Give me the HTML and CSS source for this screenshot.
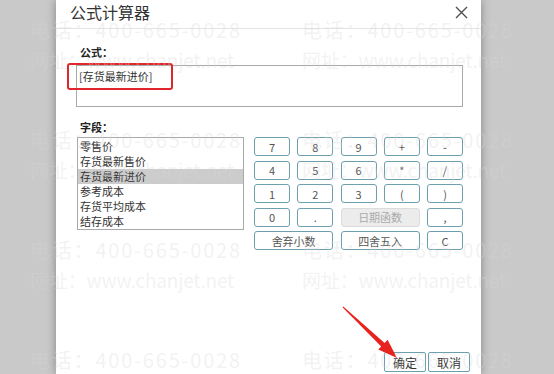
FILE: index.html
```html
<!DOCTYPE html>
<html>
<head>
    <title>公式计算器</title>
    <link rel="stylesheet" href="styles.css">
</head>
<body>
<div class="page">

    <div class="dialog">
        <div class="dlg-head">
            <span class="dlg-title">公式计算器</span>
            <svg class="dlg-close" width="13" height="13" viewBox="0 0 13 13">
                <path d="M1 1L12 12M12 1L1 12" stroke="#505050" stroke-width="1.4" fill="none"/>
            </svg>
        </div>

        <div class="dlg-body">
            <div class="field-label">公式：</div>
            <div class="formula-box">[存货最新进价]</div>

            <div class="field-label field-label-2">字段：</div>
            <div class="calc-row">
                <ul class="field-list">
                    <li>零售价</li>
                    <li>存货最新售价</li>
                    <li class="selected">存货最新进价</li>
                    <li>参考成本</li>
                    <li>存货平均成本</li>
                    <li>结存成本</li>
                </ul>

                <div class="keypad">
                    <button class="key">7</button>
                    <button class="key">8</button>
                    <button class="key">9</button>
                    <button class="key">+</button>
                    <button class="key">-</button>

                    <button class="key">4</button>
                    <button class="key">5</button>
                    <button class="key">6</button>
                    <button class="key">*</button>
                    <button class="key">/</button>

                    <button class="key">1</button>
                    <button class="key">2</button>
                    <button class="key">3</button>
                    <button class="key">(</button>
                    <button class="key">)</button>

                    <button class="key">0</button>
                    <button class="key">.</button>
                    <button class="key wide disabled">日期函数</button>
                    <button class="key">,</button>

                    <button class="key wide">舍弃小数</button>
                    <button class="key wide">四舍五入</button>
                    <button class="key">C</button>
                </div>
            </div>
        </div>

        <div class="dlg-foot">
            <button class="foot-btn">确定</button>
            <button class="foot-btn">取消</button>
        </div>
    </div>

    <!-- annotation marks -->
    <div class="mark-box"></div>
    <svg class="mark-arrow" width="554" height="374" viewBox="0 0 554 374">
        <polygon points="343.3,306.6 384.6,342.9 387.6,339.8 397,358 378.3,349.6 381.2,346.5 342.7,307.4" fill="#e8221e"/>
    </svg>

    <div class="watermark">
        <div class="wm"><p class="tel">电话：400-665-0028</p><p>网址：www.chanjet.net</p></div>
        <div class="wm"><p class="tel">电话：400-665-0028</p><p>网址：www.chanjet.net</p></div>
        <div class="wm"><p class="tel">电话：400-665-0028</p><p>网址：www.chanjet.net</p></div>
        <div class="wm"><p class="tel">电话：400-665-0028</p><p>网址：www.chanjet.net</p></div>
        <div class="wm"><p class="tel">电话：400-665-0028</p><p>网址：www.chanjet.net</p></div>
        <div class="wm"><p class="tel">电话：400-665-0028</p><p>网址：www.chanjet.net</p></div>
        <div class="wm"><p class="tel">电话：400-665-0028</p></div>
        <div class="wm"><p class="tel">电话：400-665-0028</p></div>
    </div>

</div>
</body>
</html>
```

FILE: styles.css
```css
body {
    margin: 0;
    background-color: #c9c9c9;
    font-family: "Noto Sans CJK SC", "Liberation Sans", sans-serif;
    color: #333;
    overflow: hidden;
}

.page {
    position: relative;
    width: 554px;
    height: 374px;
    padding-left: 56px;
    box-sizing: border-box;
}

.dialog {
    width: 425px;
    height: 374px;
    background-color: #fff;
    box-shadow: 0 0 9px rgba(0, 0, 0, 0.35);
    display: flex;
    flex-direction: column;
}

.dlg-head {
    height: 28px;
    border-bottom: 1px solid #e4e4e4;
    display: flex;
    align-items: center;
    justify-content: space-between;
    padding: 0 13px 0 14px;
}

.dlg-title {
    font-size: 16px;
    line-height: 20px;
    color: #333;
    margin-top: -5px;
}

.dlg-close {
    margin-top: -4px;
}

.dlg-body {
    padding: 15px 18px 0 20px;
}

.field-label {
    font-size: 11px;
    font-weight: bold;
    line-height: 16px;
    padding-left: 4px;
    color: #222;
}

.formula-box {
    margin-top: 5px;
    height: 42px;
    box-sizing: border-box;
    border: 1px solid #a9a9a9;
    padding: 2px 2px;
    font-size: 11px;
    line-height: 16px;
    color: #333;
}

.field-label-2 {
    margin-top: 12px;
}

.calc-row {
    margin-top: 2px;
    display: flex;
    gap: 10px;
}

.field-list {
    list-style: none;
    margin: 0 0 0 1px;
    padding: 1px 0 0 0;
    width: 167px;
    height: 93px;
    box-sizing: border-box;
    border: 1px solid #a9a9a9;
}

.field-list li {
    height: 15px;
    line-height: 15px;
    font-size: 11px;
    padding-left: 2px;
    color: #333;
}

.field-list li.selected {
    background-color: #cccccc;
}

.keypad {
    display: grid;
    grid-template-columns: repeat(5, 36px);
    grid-auto-rows: 19px;
    column-gap: 7.25px;
    row-gap: 4.5px;
}

.key {
    margin: 0;
    padding: 0;
    border: 1px solid #6e9fae;
    border-radius: 3px;
    background-color: #fff;
    font-family: "Noto Sans CJK SC", "Liberation Sans", sans-serif;
    font-size: 11px;
    color: #555;
    cursor: pointer;
}

.key.wide {
    grid-column: span 2;
}

.key.disabled {
    background-color: #ececec;
    border-color: #dcdcdc;
    color: #aaa;
}

.dlg-foot {
    margin-top: auto;
    display: flex;
    justify-content: flex-end;
    gap: 2px;
    padding: 0 11px 2px 0;
}

.foot-btn {
    width: 42px;
    height: 20px;
    margin: 0;
    padding: 0;
    border: 1px solid #6e9fae;
    border-radius: 2px;
    background-color: #fff;
    font-family: "Noto Sans CJK SC", "Liberation Sans", sans-serif;
    font-size: 12px;
    color: #333;
}

/* red annotation */
.mark-box {
    position: absolute;
    left: 67px;
    top: 63px;
    width: 106px;
    height: 27px;
    box-sizing: border-box;
    border: 2px solid #e0262a;
    border-radius: 3px;
}

.mark-arrow {
    position: absolute;
    left: 0;
    top: 0;
}

/* watermark tiles */
.watermark {
    position: absolute;
    left: 0;
    top: 0;
    width: 554px;
    height: 374px;
    padding: 15px 0 0 30px;
    box-sizing: border-box;
    display: grid;
    grid-template-columns: 272px 272px;
    grid-auto-rows: 110px;
    pointer-events: none;
    overflow: hidden;
}

.wm p {
    margin: 0;
    height: 30px;
    line-height: 30px;
    white-space: nowrap;
    font-size: 19px;
    letter-spacing: -0.2px;
    color: rgba(215, 215, 215, 0.32);
}

.wm p.tel {
    font-size: 20px;
    letter-spacing: 1.8px;
}
```
